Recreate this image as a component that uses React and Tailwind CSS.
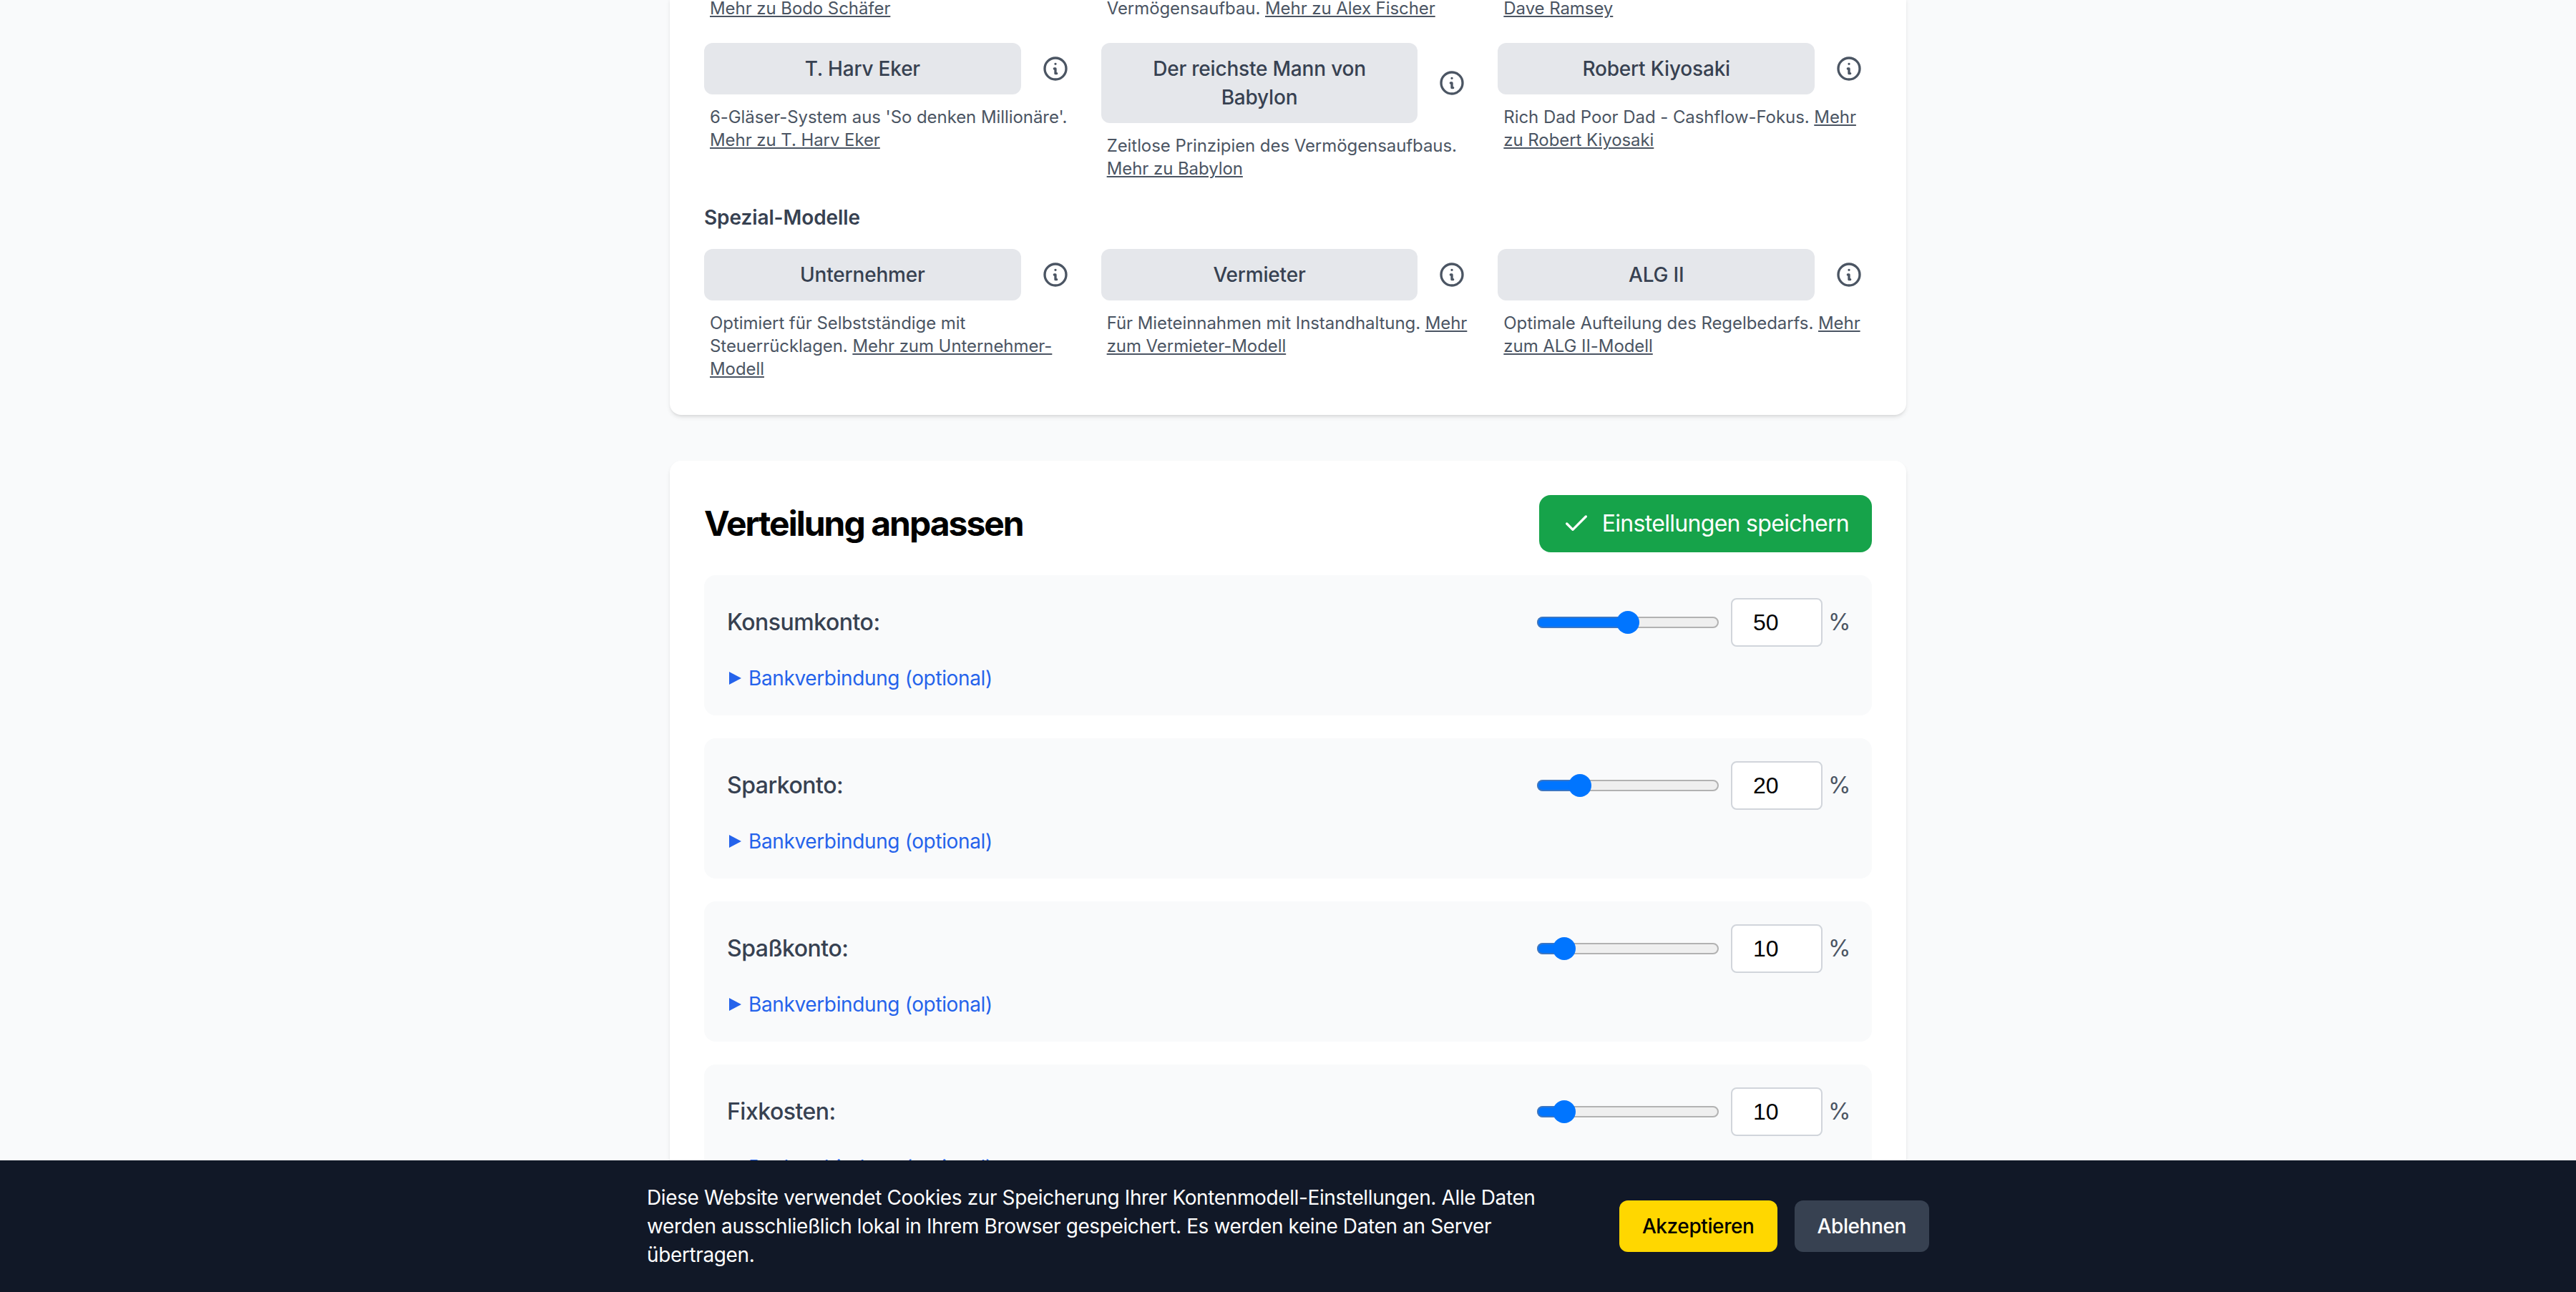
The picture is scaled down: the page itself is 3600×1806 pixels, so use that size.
import React from "react";

const font = { fontFamily: "Inter, 'Liberation Sans', sans-serif" };

function InfoIcon() {
  return (
    <svg className="w-10 h-10 text-[#4b5563]" fill="none" viewBox="0 0 24 24" stroke="currentColor" strokeWidth="2" strokeLinecap="round" strokeLinejoin="round">
      <path d="M13 16h-1v-4h-1m1-4h.01M21 12a9 9 0 11-18 0 9 9 0 0118 0z" />
    </svg>
  );
}

function Model({ name, children }) {
  return (
    <div>
      <div className="flex items-center">
        <button className="flex-1 min-w-0 rounded-xl bg-[#e5e7eb] px-8 py-4 text-center text-[28px] leading-10 font-medium tracking-[-0.2px] text-[#374151]">{name}</button>
        <div className="ml-4 p-3 shrink-0"><InfoIcon /></div>
      </div>
      <p className="mt-4 px-2 text-2xl leading-8 tracking-[-0.07px] text-[#4b5563]">{children}</p>
    </div>
  );
}

const L = ({ children }) => <a className="underline">{children}</a>;

function Slider({ value }) {
  const pos = 16 + 222 * (value / 100);
  return (
    <div className="relative w-[254px] h-8 shrink-0 flex items-center">
      <div className="w-full h-4 rounded-lg border-2 border-[#b2b2b2] bg-[#efefef]" />
      <div className="absolute left-0 top-2 h-4 rounded-l-lg bg-[#0075ff] border-2 border-r-0 border-[#3a76c4]" style={{ width: pos }} />
      <div className="absolute top-0 w-8 h-8 rounded-full bg-[#0075ff]" style={{ left: pos - 16 }} />
    </div>
  );
}

function Account({ label, value }) {
  return (
    <div className="rounded-2xl bg-[#f9fafb] p-8">
      <div className="flex items-center justify-between">
        <label className="text-[32px] leading-12 font-medium tracking-[-0.5px] text-[#374151]">{label}</label>
        <div className="flex items-center">
          <Slider value={value} />
          <div className="ml-[17px] w-32 h-[68px] rounded-lg border-2 border-[#d1d5db] bg-white flex items-center pl-[29px] text-[32px] text-black" style={{ fontFamily: "'Liberation Sans', sans-serif" }}>{value}</div>
          <span className="ml-2 w-[29px] text-[32px] text-[#4b5563]">%</span>
        </div>
      </div>
      <details className="mt-6">
        <summary className="flex list-none items-center text-[28px] leading-10 tracking-[-0.37px] text-[#2563eb]">
          <svg className="ml-[3px] mr-[10px] shrink-0" width="17" height="18" viewBox="0 0 17 18" fill="currentColor"><path d="M0 0 17 9 0 18z" /></svg>
          Bankverbindung (optional)
        </summary>
      </details>
    </div>
  );
}

export default function App() {
  return (
    <div className="relative h-[1806px] overflow-hidden bg-[#f9fafb]" style={font}>
      <main className="mx-auto w-[1728px] -mt-1 flex flex-col gap-16">
        <section className="rounded-b-2xl bg-white px-12 pb-12 shadow-md">
          <div className="grid grid-cols-3 gap-8">
            <p className="px-2 text-2xl leading-8 tracking-[-0.07px] text-[#4b5563]"><L>Mehr zu Bodo Schäfer</L></p>
            <p className="px-2 text-2xl leading-8 tracking-[-0.07px] text-[#4b5563]">Vermögensaufbau. <L>Mehr zu Alex Fischer</L></p>
            <p className="px-2 text-2xl leading-8 tracking-[-0.07px] text-[#4b5563]"><L>Dave Ramsey</L></p>
            <Model name="T. Harv Eker">6-Gläser-System aus 'So denken Millionäre'. <L>Mehr zu T. Harv Eker</L></Model>
            <Model name="Der reichste Mann von Babylon">Zeitlose Prinzipien des Vermögensaufbaus. <L>Mehr zu Babylon</L></Model>
            <Model name="Robert Kiyosaki">Rich Dad Poor Dad - Cashflow-Fokus. <L>Mehr zu Robert Kiyosaki</L></Model>
          </div>
          <h3 className="mt-8 mb-6 text-[28px] leading-10 font-semibold tracking-[-0.1px] text-[#374151]">Spezial-Modelle</h3>
          <div className="grid grid-cols-3 gap-8">
            <Model name="Unternehmer">Optimiert für Selbstständige mit Steuerrücklagen. <L>Mehr zum Unternehmer-Modell</L></Model>
            <Model name="Vermieter">Für Mieteinnahmen mit Instandhaltung. <L>Mehr zum Vermieter-Modell</L></Model>
            <Model name="ALG II">Optimale Aufteilung des Regelbedarfs. <L>Mehr zum ALG II-Modell</L></Model>
          </div>
        </section>
        <section className="rounded-2xl bg-white p-12 shadow-md">
          <div className="mb-8 flex items-center justify-between">
            <h2 className="text-5xl leading-16 font-bold tracking-[-2px] text-black">Verteilung anpassen</h2>
            <button className="flex items-center gap-4 rounded-2xl bg-[#16a34a] px-8 py-4 text-[32px] leading-12 font-normal tracking-[-0.7px] text-white">
              <svg className="w-10 h-10" fill="none" viewBox="0 0 24 24" stroke="currentColor" strokeWidth="2" strokeLinecap="round" strokeLinejoin="round"><path d="M20 6 9 17l-5-5" /></svg>
              Einstellungen speichern
            </button>
          </div>
          <div className="flex flex-col gap-8">
            <Account label="Konsumkonto:" value={50} />
            <Account label="Sparkonto:" value={20} />
            <Account label="Spaßkonto:" value={10} />
            <Account label="Fixkosten:" value={10} />
          </div>
        </section>
      </main>
      <div className="absolute bottom-0 left-0 right-0 bg-[#111827] py-8">
        <div className="mx-auto flex w-[1792px] items-center justify-between gap-8">
          <p className="flex-1 text-[28px] leading-10 tracking-[-0.38px] text-white">Diese Website verwendet Cookies zur Speicherung Ihrer Kontenmodell-Einstellungen. Alle Daten werden ausschließlich lokal in Ihrem Browser gespeichert. Es werden keine Daten an Server übertragen.</p>
          <div className="flex gap-6 shrink-0">
            <button className="rounded-xl bg-[#ffd700] px-8 py-4 text-[28px] leading-10 font-medium tracking-[-0.4px] text-black">Akzeptieren</button>
            <button className="rounded-xl bg-[#374151] px-8 py-4 text-[28px] leading-10 font-medium tracking-[-0.4px] text-white">Ablehnen</button>
          </div>
        </div>
      </div>
    </div>
  );
}
